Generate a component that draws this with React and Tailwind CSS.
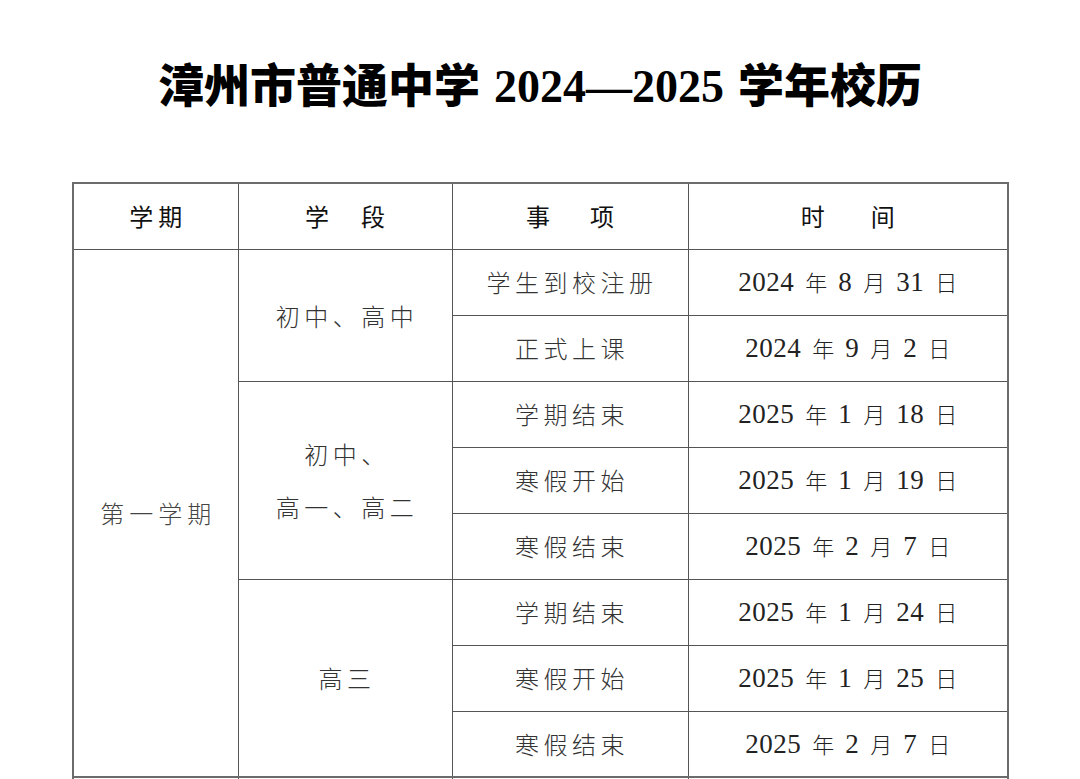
import React from 'react';

const cjk = '"Noto Sans CJK SC", sans-serif';

const rows = [
  { term: '第一学期', termSpan: 8, stage: ['初中、高中'], stageSpan: 2, item: '学生到校注册', date: ['2024', '8', '31'] },
  { item: '正式上课', date: ['2024', '9', '2'] },
  { stage: ['初中、', '高一、高二'], stageSpan: 3, item: '学期结束', date: ['2025', '1', '18'] },
  { item: '寒假开始', date: ['2025', '1', '19'] },
  { item: '寒假结束', date: ['2025', '2', '7'] },
  { stage: ['高三'], stageSpan: 3, item: '学期结束', date: ['2025', '1', '24'] },
  { item: '寒假开始', date: ['2025', '1', '25'] },
  { item: '寒假结束', date: ['2025', '2', '7'] },
];

const DateText = ({ parts }) => {
  const [y, m, d] = parts;
  return (
    <span className="inline-flex items-baseline gap-[11px] text-[#222]">
      <span className="font-['Liberation_Serif'] text-[27px] tracking-[0.5px]">{y}</span>
      <span className="text-[22px] font-light">年</span>
      <span className="font-['Liberation_Serif'] text-[27px] tracking-[0.5px]">{m}</span>
      <span className="text-[22px] font-light">月</span>
      <span className="font-['Liberation_Serif'] text-[27px] tracking-[0.5px]">{d}</span>
      <span className="text-[22px] font-light">日</span>
    </span>
  );
};

export default function App() {
  return (
    <div className="w-[1080px] h-[779px] overflow-hidden bg-white" style={{ fontFamily: cjk }}>
      <h1 className="pt-[57px] text-center text-[46px] leading-[50px] font-black text-black">
        <span>漳州市普通中学</span>
        <span className="font-['Liberation_Serif'] font-bold mx-[14px]">2024—2025</span>
        <span>学年校历</span>
      </h1>

      <table className="mt-[70px] ml-[72px] w-[935px] border-collapse border-2 border-[#6b6b6b] table-fixed">
        <colgroup>
          <col className="w-[165px]" />
          <col className="w-[214px]" />
          <col className="w-[236px]" />
          <col className="w-[320px]" />
        </colgroup>
        <thead>
          <tr className="h-[66px] text-[24px] text-[#111]">
            <th className="border border-[#555] font-normal tracking-[5px] pl-[5px]">学期</th>
            <th className="border border-[#555] font-normal">
              <span className="inline-flex gap-[32px]"><span>学</span><span>段</span></span>
            </th>
            <th className="border border-[#555] font-normal">
              <span className="inline-flex gap-[40px]"><span>事</span><span>项</span></span>
            </th>
            <th className="border border-[#555] font-normal">
              <span className="inline-flex gap-[46px]"><span>时</span><span>间</span></span>
            </th>
          </tr>
        </thead>
        <tbody className="text-[24px] font-light text-[#333]">
          {rows.map((r, i) => (
            <tr key={i} className="h-[66px]">
              {r.term && (
                <td rowSpan={r.termSpan} className="border border-[#555] text-center tracking-[5px] pl-[5px] text-[#444]">
                  {r.term}
                </td>
              )}
              {r.stage && (
                <td rowSpan={r.stageSpan} className="border border-[#555] text-center tracking-[4.5px] pl-[4px] leading-[53px]">
                  {r.stage.map((s) => (
                    <div key={s}>{s}</div>
                  ))}
                </td>
              )}
              <td className="border border-[#555] text-center tracking-[4.5px] pl-[4px]">{r.item}</td>
              <td className="border border-[#555] text-center">
                <DateText parts={r.date} />
              </td>
            </tr>
          ))}
          <tr className="h-[66px] border-t-2 border-[#6b6b6b]">
            <td className="border border-[#555]"></td>
            <td className="border border-[#555]"></td>
            <td className="border border-[#555]"></td>
            <td className="border border-[#555]"></td>
          </tr>
        </tbody>
      </table>
    </div>
  );
}
